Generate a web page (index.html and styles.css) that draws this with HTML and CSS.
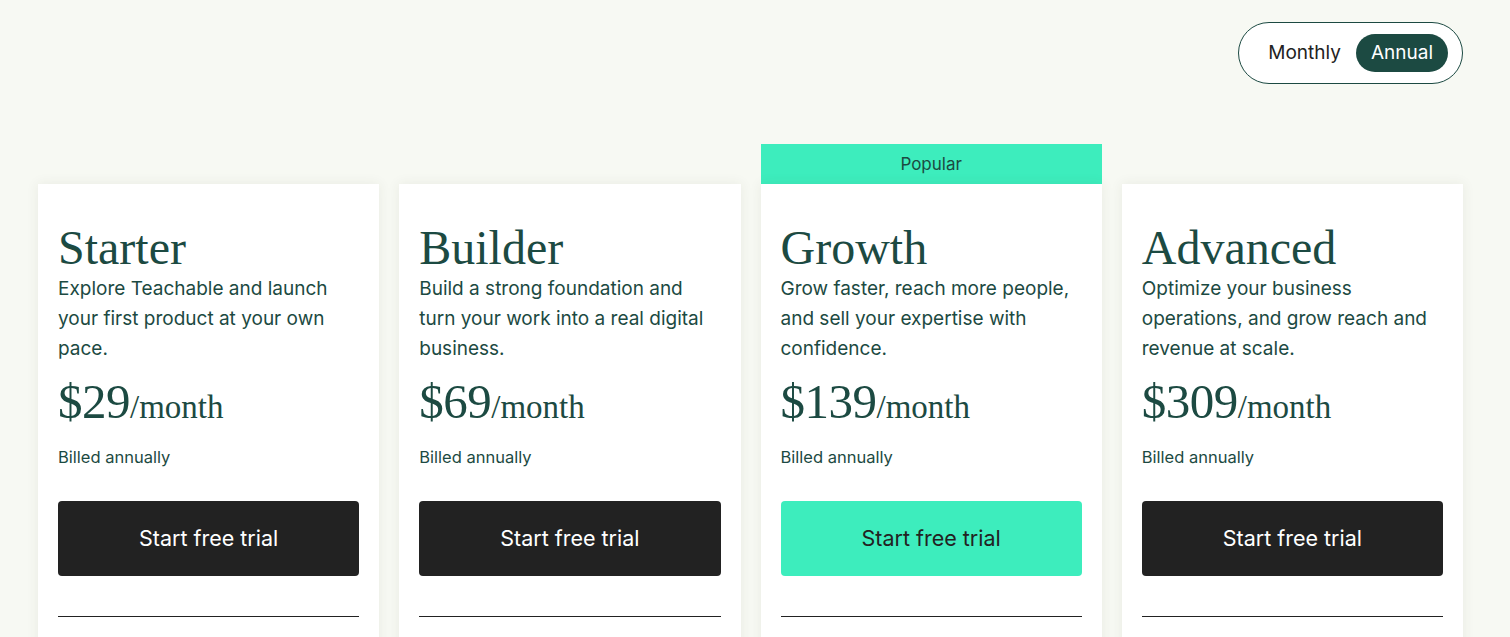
FILE: index.html
```html
<!DOCTYPE html>
<html lang="en">
<head>
<meta charset="utf-8">
<title>Pricing</title>
<link rel="stylesheet" href="styles.css">
</head>
<body>
<div class="page">
  <div class="toggle-row">
    <div class="toggle">
      <span class="opt">Monthly</span>
      <span class="opt active">Annual</span>
    </div>
  </div>
  <div class="plans">
    <div class="plan">
      <div class="badge-slot"></div>
      <div class="card">
        <h2 class="name">Starter</h2>
        <p class="desc">Explore Teachable and launch your first product at your own pace.</p>
        <div class="price"><span class="amt">$29</span><span class="per">/month</span></div>
        <div class="billed">Billed annually</div>
        <a class="btn">Start free trial</a>
        <hr class="rule">
      </div>
    </div>
    <div class="plan">
      <div class="badge-slot"></div>
      <div class="card">
        <h2 class="name">Builder</h2>
        <p class="desc">Build a strong foundation and turn your work into a real digital business.</p>
        <div class="price"><span class="amt">$69</span><span class="per">/month</span></div>
        <div class="billed">Billed annually</div>
        <a class="btn">Start free trial</a>
        <hr class="rule">
      </div>
    </div>
    <div class="plan">
      <div class="badge-slot"><div class="badge">Popular</div></div>
      <div class="card">
        <h2 class="name">Growth</h2>
        <p class="desc">Grow faster, reach more people, and sell your expertise with confidence.</p>
        <div class="price"><span class="amt">$139</span><span class="per">/month</span></div>
        <div class="billed">Billed annually</div>
        <a class="btn btn-green">Start free trial</a>
        <hr class="rule">
      </div>
    </div>
    <div class="plan">
      <div class="badge-slot"></div>
      <div class="card">
        <h2 class="name">Advanced</h2>
        <p class="desc">Optimize your business operations, and grow reach and revenue at scale.</p>
        <div class="price"><span class="amt">$309</span><span class="per">/month</span></div>
        <div class="billed">Billed annually</div>
        <a class="btn">Start free trial</a>
        <hr class="rule">
      </div>
    </div>
  </div>
</div>
</body>
</html>
```
FILE: styles.css
```css
html, body {
  margin: 0;
  padding: 0;
  background: #f7f9f3;
  overflow: hidden;
}
body {
  font-family: Inter, "Noto Sans", sans-serif;
  color: #1c4a42;
}
.page {
  padding: 22px 47px 0 38px;
}
.toggle-row {
  display: flex;
  justify-content: flex-end;
}
.toggle {
  display: flex;
  align-items: center;
  justify-content: flex-end;
  box-sizing: border-box;
  width: 225px;
  height: 62px;
  padding: 0 14px;
  border: 1px solid #1c4a42;
  border-radius: 31px;
  background: #fff;
}
.opt {
  font-size: 19px;
  color: #222;
  padding: 0 15px;
  height: 38px;
  line-height: 38px;
  border-radius: 19px;
}
.opt.active {
  background: #1c4a42;
  color: #fff;
}
.plans {
  display: grid;
  grid-template-columns: repeat(4, 1fr);
  gap: 20px;
  margin-top: 60px;
}
.badge-slot {
  height: 40px;
}
.badge {
  height: 40px;
  line-height: 40px;
  background: #3dedbd;
  text-align: center;
  font-size: 17px;
  color: #1c4a42;
}
.card {
  background: #fff;
  box-shadow: 0 0 12px rgba(60, 70, 40, 0.08);
  padding: 38px 20px 40px;
  height: 500px;
}
.name {
  font-family: "Liberation Serif", "DejaVu Serif", serif;
  font-weight: 400;
  font-size: 48px;
  line-height: 52px;
  margin: 0;
  color: #1c4a42;
}
.desc {
  margin: 0;
  font-size: 19px;
  line-height: 30px;
}
.price {
  font-family: "Liberation Serif", "DejaVu Serif", serif;
  margin-top: 10px;
  line-height: 56px;
}
.amt {
  font-size: 49px;
  letter-spacing: -0.5px;
}
.per {
  font-size: 33px;
}
.billed {
  font-size: 16.5px;
  margin-top: 4px;
  line-height: 24px;
}
.btn {
  display: block;
  margin-top: 32px;
  height: 75px;
  line-height: 75px;
  background: #222222;
  color: #fff;
  border-radius: 4px;
  text-align: center;
  font-size: 21.5px;
}
.btn-green {
  background: #3dedbd;
  color: #222;
}
.rule {
  margin: 40px 0 0;
  border: 0;
  border-top: 1px solid #222;
}
```
